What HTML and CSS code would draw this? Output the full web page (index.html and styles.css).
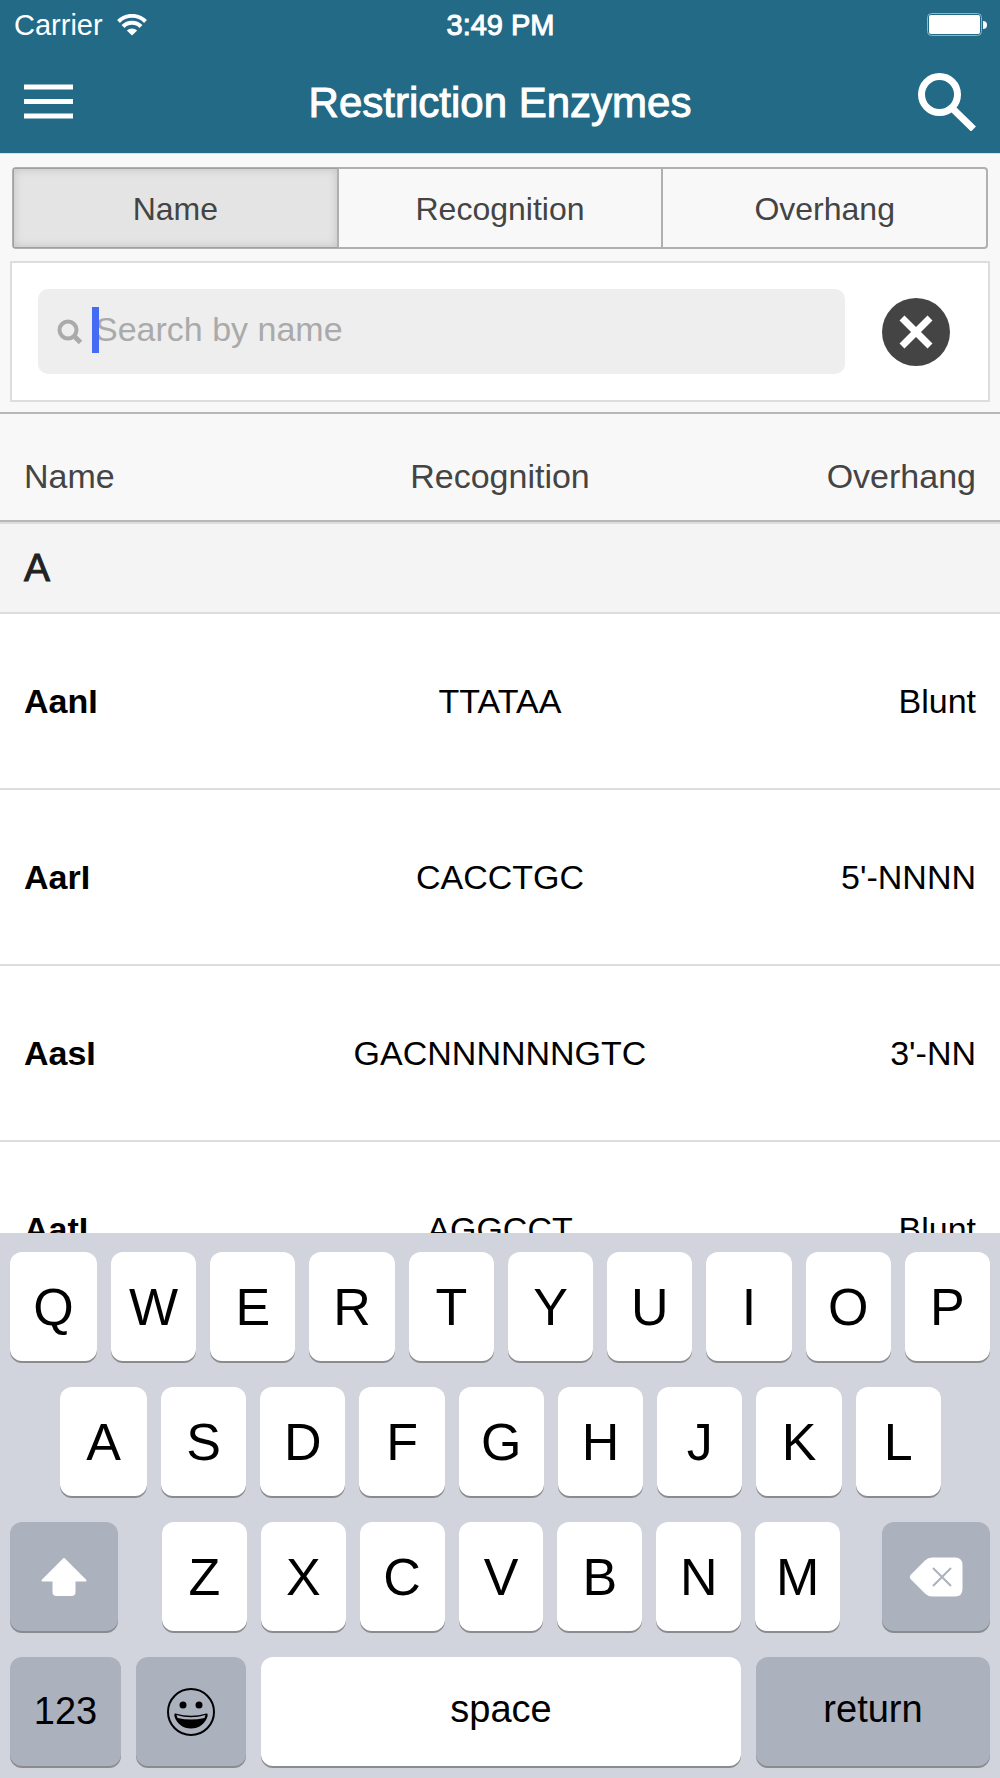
FILE: index.html
```html
<!DOCTYPE html>
<html lang="en">
<head>
    <meta charset="UTF-8">
    <meta name="viewport" content="width=device-width, initial-scale=1.0">
    <title>Restriction Enzymes</title>
    <link rel="stylesheet" href="styles.css">
</head>
<body>
    <header class="header">
        <div class="status-bar">
            <div class="carrier">
                <span>Carrier</span>
                <svg width="30" height="22" viewBox="0 0 30 22" fill="none" stroke="#fff" stroke-width="4">
                    <path d="M1.5 7.5A19 19 0 0 1 28.500 7.500"/>
                    <path d="M6 12.500A12.500 12.500 0 0 1 24 12.500"/>
                    <path d="M15 21.500L9.800 16.500A7.500 7.500 0 0 1 20.200 16.500Z" fill="#fff" stroke="none"/>
                </svg>
            </div>
            <div class="clock">3:49 PM</div>
            <div class="battery">
                <svg width="60" height="24" viewBox="0 0 60 24">
                    <rect x="0.500" y="0.500" width="54" height="22" rx="4" fill="none" stroke="#8fb4c2"/>
                    <rect x="2" y="2" width="51" height="19" rx="2" fill="#fff"/>
                    <path d="M56 8a4 4 0 0 1 0 8z" fill="#fff"/>
                </svg>
            </div>
        </div>
        <div class="title-bar">
            <button class="icon-button" aria-label="Menu">
                <svg width="49" height="36" viewBox="0 0 49 36" fill="#fff">
                    <rect y="0.500" width="49" height="5"/>
                    <rect y="15" width="49" height="5"/>
                    <rect y="29.500" width="49" height="5"/>
                </svg>
            </button>
            <h1>Restriction Enzymes</h1>
            <button class="icon-button right" aria-label="Search">
                <svg width="58" height="58" viewBox="0 0 58 58" fill="none" stroke="#fff" stroke-width="7">
                    <circle cx="21.500" cy="21.500" r="18"/>
                    <path d="M35.500 36.500L55.500 56" stroke-width="7"/>
                </svg>
            </button>
        </div>
    </header>

    <main class="content">
        <div class="tabs">
            <button class="tab active">Name</button>
            <button class="tab">Recognition</button>
            <button class="tab">Overhang</button>
        </div>

        <form class="search-card">
            <div class="search-box">
                <svg class="search-icon" width="26" height="26" viewBox="0 0 26 26" fill="none" stroke="#aaa" stroke-width="4">
                    <circle cx="11" cy="11" r="8.500"/>
                    <path d="M16.500 16.500L23.500 23.500" stroke-width="5"/>
                </svg>
                <span class="caret"></span>
                <input type="text" placeholder="Search by name" aria-label="Search by name">
            </div>
            <button type="reset" class="clear" aria-label="Clear search">
                <svg width="68" height="68" viewBox="0 0 68 68">
                    <circle cx="34" cy="34" r="34" fill="#444"/>
                    <path d="M20 20L48 48M48 20L20 48" stroke="#fff" stroke-width="7"/>
                </svg>
            </button>
        </form>

        <table class="enzymes">
            <thead>
                <tr>
                    <th>Name</th>
                    <th>Recognition</th>
                    <th>Overhang</th>
                </tr>
            </thead>
            <tbody>
                <tr class="group"><th colspan="3">A</th></tr>
                <tr><td>AanI</td><td>TTATAA</td><td>Blunt</td></tr>
                <tr><td>AarI</td><td>CACCTGC</td><td>5'-NNNN</td></tr>
                <tr><td>AasI</td><td>GACNNNNNNGTC</td><td>3'-NN</td></tr>
                <tr><td>AatI</td><td>AGGCCT</td><td>Blunt</td></tr>
            </tbody>
        </table>
    </main>

    <div class="keyboard">
        <div class="key-row">
            <button class="key">Q</button>
            <button class="key">W</button>
            <button class="key">E</button>
            <button class="key">R</button>
            <button class="key">T</button>
            <button class="key">Y</button>
            <button class="key">U</button>
            <button class="key">I</button>
            <button class="key">O</button>
            <button class="key">P</button>
        </div>
        <div class="key-row inset">
            <button class="key">A</button>
            <button class="key">S</button>
            <button class="key">D</button>
            <button class="key">F</button>
            <button class="key">G</button>
            <button class="key">H</button>
            <button class="key">J</button>
            <button class="key">K</button>
            <button class="key">L</button>
        </div>
        <div class="key-row spread">
            <button class="key dark" aria-label="Shift">
                <svg width="46" height="40" viewBox="0 0 46 40" fill="#fff" stroke="#fff" stroke-width="2" stroke-linejoin="round">
                    <path d="M23 2L44.500 23.500H33.500V35Q33.500 38 30.500 38H15.500Q12.500 38 12.500 35V23.500H1.500Z"/>
                </svg>
            </button>
            <div class="key-group">
                <button class="key">Z</button>
                <button class="key">X</button>
                <button class="key">C</button>
                <button class="key">V</button>
                <button class="key">B</button>
                <button class="key">N</button>
                <button class="key">M</button>
            </div>
            <button class="key dark" aria-label="Delete">
                <svg width="54" height="40" viewBox="0 0 54 40">
                    <path d="M1.500 18L16 3.500Q19 0.500 23 0.500H46Q53.500 0.500 53.500 8V32Q53.500 39.500 46 39.500H23Q19 39.500 16 36.500L1.500 22Q0 20 1.500 18Z" fill="#fff"/>
                    <path d="M24 11L42 29M42 11L24 29" stroke="#abb1bd" stroke-width="2"/>
                </svg>
            </button>
        </div>
        <div class="key-row bottom">
            <button class="key dark small">123</button>
            <button class="key dark" aria-label="Emoji">
                <svg width="48" height="48" viewBox="0 0 48 48">
                    <circle cx="24" cy="24" r="23" fill="none" stroke="#000" stroke-width="2"/>
                    <circle cx="16" cy="17" r="3.500"/>
                    <circle cx="32" cy="17" r="3.500"/>
                    <path d="M8.500 25.500Q24 30 39.500 25.500Q41 25 40.500 28.500C38 36 32 40.500 24 40.500S10 36 7.500 28.500Q7 25 8.500 25.500Z"/>
                    <path d="M9.500 27Q24 31.500 38.500 27L37.500 30Q24 33 10.500 30Z" fill="#abb1bd"/>
                </svg>
            </button>
            <button class="key small word">space</button>
            <button class="key dark small word">return</button>
        </div>
    </div>
</body>
</html>
```
FILE: styles.css
```css
* {
    box-sizing: border-box;
}

body {
    margin: 0;
    height: 100vh;
    display: flex;
    flex-direction: column;
    overflow: hidden;
    background-color: #f8f8f8;
    color: #000;
    font-family: 'Helvetica Neue', Helvetica, 'Liberation Sans', Arial, sans-serif;
}

button {
    border: none;
    padding: 0;
    background: none;
    color: inherit;
    font-family: inherit;
    cursor: pointer;
}

svg {
    display: block;
}

/* Header */
.header {
    flex: none;
    background-color: #226a86;
    color: white;
    border-bottom: 1px solid #ddd;
}

.status-bar {
    display: grid;
    grid-template-columns: 1fr auto 1fr;
    align-items: center;
    height: 50px;
    padding: 0 13px 0 14px;
    font-size: 29px;
}

.carrier {
    display: flex;
    align-items: center;
    gap: 14px;
}

.clock {
    -webkit-text-stroke: 1px white;
}

.battery {
    justify-self: end;
}

.title-bar {
    display: grid;
    grid-template-columns: 1fr auto 1fr;
    align-items: center;
    height: 103px;
    padding: 0 24px;
}

.title-bar h1 {
    margin: 0;
    padding-top: 2px;
    font-size: 42px;
    font-weight: normal;
    -webkit-text-stroke: 1px white;
}

.icon-button {
    justify-self: start;
}

.icon-button.right {
    justify-self: end;
}

/* Tabs and search */
.content {
    flex: 1;
    min-height: 0;
    overflow: hidden;
}

.tabs {
    display: flex;
    margin: 13px 12px 12px;
    border: 2px solid #b0b0b0;
    border-radius: 4px;
}

.tab {
    flex: 1;
    height: 78px;
    padding-top: 3px;
    color: #444;
    font-size: 32px;
}

.tab + .tab {
    border-left: 2px solid #b0b0b0;
}

.tab.active {
    background-color: #e4e4e4;
    box-shadow: inset 0 0 10px rgba(0, 0, 0, 0.15), 0 0 0 1px #a0a0a0;
}

.search-card {
    display: flex;
    align-items: center;
    gap: 37px;
    margin: 0 10px 10px;
    padding: 26px 38px 26px 26px;
    border: 2px solid #ddd;
    background-color: white;
}

.search-box {
    position: relative;
    flex: 1;
    display: flex;
    align-items: center;
    height: 85px;
    padding-left: 19px;
    border-radius: 10px;
    background-color: #eee;
}

.search-box input {
    flex: 1;
    min-width: 0;
    padding: 0 0 4px 12px;
    border: none;
    outline: none;
    background: none;
    font-family: inherit;
    font-size: 34px;
}

.search-box input::placeholder {
    color: #aaa;
    opacity: 1;
}

.caret {
    position: absolute;
    left: 54px;
    top: 18px;
    width: 7px;
    height: 46px;
    background-color: #436bf3;
}

/* Enzyme list */
.enzymes {
    width: 100%;
    table-layout: fixed;
    border-spacing: 0;
    border-top: 2px solid #b8b8b8;
    font-size: 34px;
}

.enzymes th,
.enzymes td {
    padding: 0;
    text-align: center;
    font-weight: normal;
}

.enzymes th:first-child,
.enzymes td:first-child {
    padding-left: 24px;
    text-align: left;
}

.enzymes th:last-child,
.enzymes td:last-child {
    padding-right: 24px;
    text-align: right;
}

.enzymes thead th {
    height: 108px;
    padding-top: 18px;
    border-bottom: 2px solid #b8b8b8;
    color: #444;
}

.enzymes .group th {
    height: 92px;
    border-top: 2px solid #ddd;
    border-bottom: 2px solid #ddd;
    background-color: #f4f4f4;
    color: #222;
    font-size: 39px;
    text-align: left;
    -webkit-text-stroke: 1px #222;
}

.enzymes td {
    height: 176px;
    border-bottom: 2px solid #ddd;
    background-color: white;
}

.enzymes td:first-child {
    font-weight: bold;
}

/* Keyboard */
.keyboard {
    flex: none;
    display: flex;
    flex-direction: column;
    gap: 26px;
    padding: 19px 10px 12px;
    background-color: #d1d4dc;
}

.key-row,
.key-group {
    display: flex;
    gap: 14px;
}

.key-row.inset {
    padding: 0 49px 0 50px;
}

.key {
    flex: 1;
    display: flex;
    justify-content: center;
    align-items: center;
    height: 109px;
    border-radius: 12px;
    background-color: white;
    box-shadow: 0 2px 0 #898b8f;
    font-size: 52px;
}

/* the first letter of a row is a touch wider */
.key-row > .key:first-child {
    flex-grow: 1.02;
}

.key.dark {
    background-color: #abb1bd;
}

.key.small {
    font-size: 38px;
}

.key.word {
    padding-bottom: 4px;
}

.key-row.spread {
    display: grid;
    grid-template-columns: 108fr 680fr 108fr;
    gap: 42px;
}

.key-group {
    padding-left: 2px;
}

.key-row.bottom {
    display: grid;
    grid-template-columns: 111fr 110fr 480fr 234fr;
    gap: 15px;
}
```
